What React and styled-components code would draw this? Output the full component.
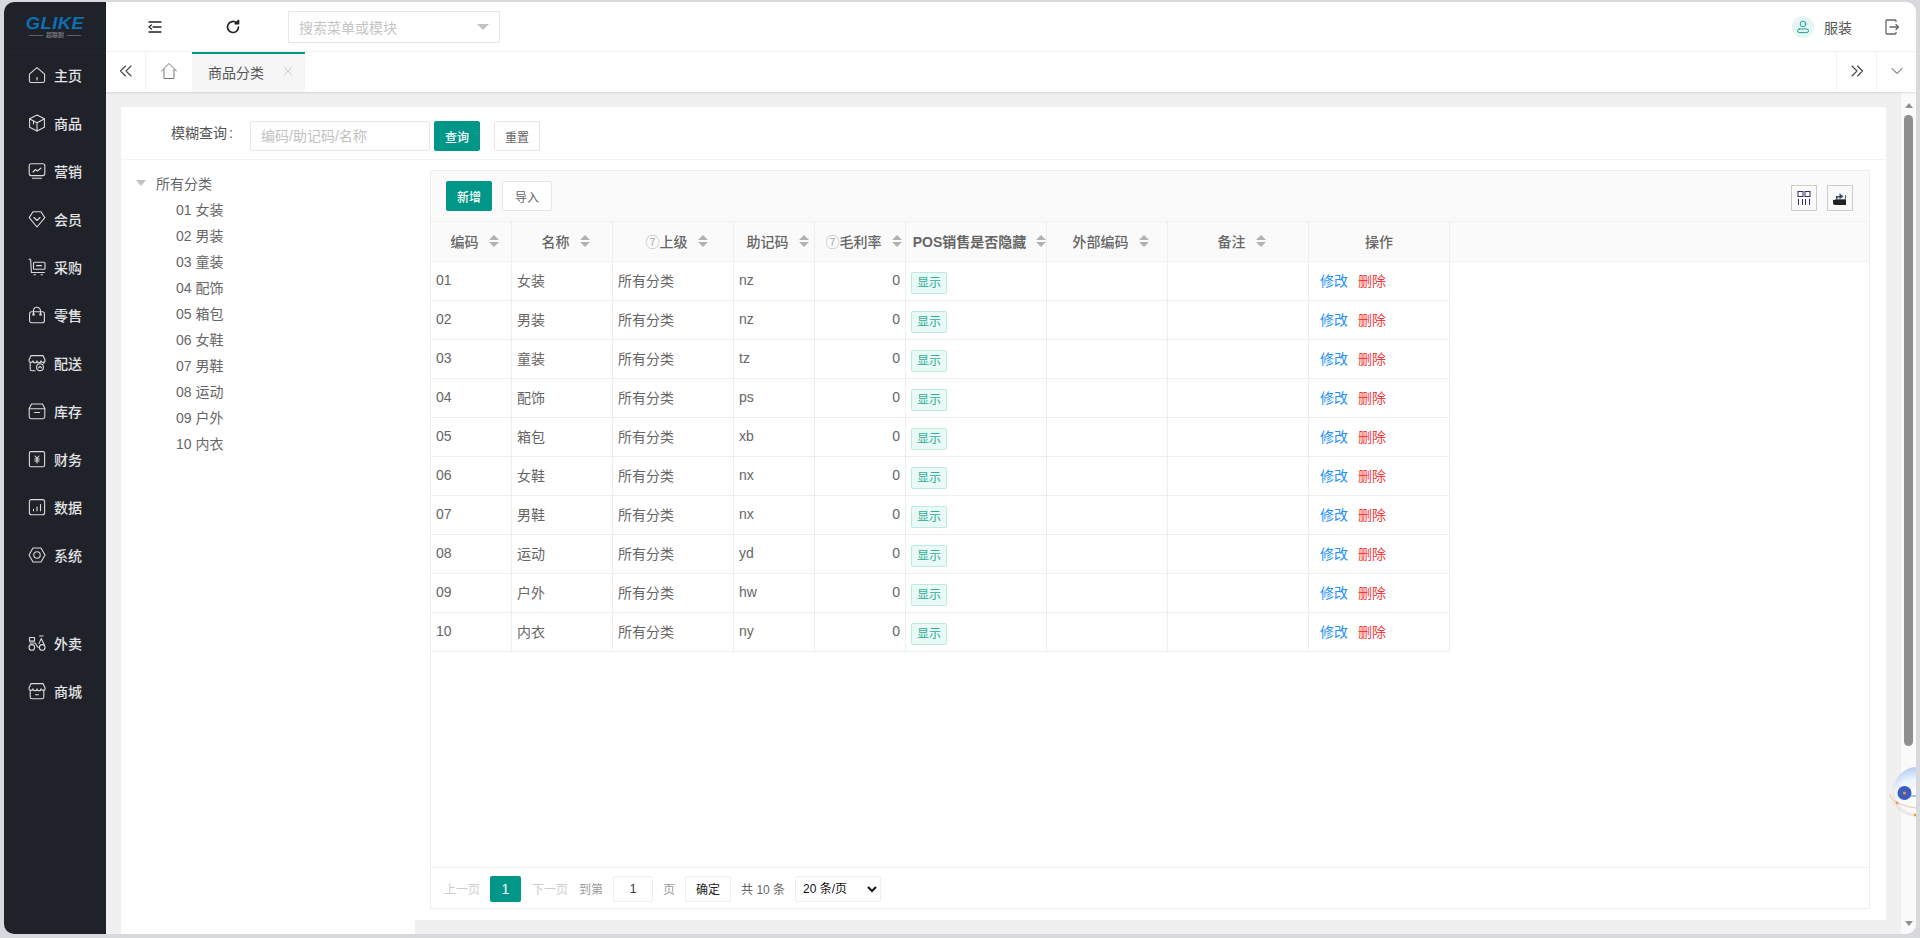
import React from "react";
import styled, { createGlobalStyle } from "styled-components";

const Global = createGlobalStyle`
  html, body { margin: 0; padding: 0; height: 100%; overflow: hidden; background: #d8d9dd; }
  * { box-sizing: border-box; }
  body { font-family: "Liberation Sans", "Noto Sans CJK SC", sans-serif; font-size: 14px; color: #666; }
`;

const Frame = styled.div`
  height: 938px;
  padding: 2px 4px 4px 4px;
`;
const Win = styled.div`
  height: 932px;
  display: flex;
  border-radius: 10px;
  overflow: hidden;
  background: #f0f0f0;
  position: relative;
`;
const Side = styled.aside`
  width: 102px;
  flex: none;
  background: #1f2229;
  display: flex;
  flex-direction: column;
`;
const LogoBox = styled.div`
  height: 50px;
  display: flex;
  flex-direction: column;
  align-items: center;
  padding-top: 13px;
  border-bottom: 1px solid #23262d;
`;
const LogoWord = styled.span`
  font: italic 900 17px/17px "Liberation Sans", sans-serif;
  color: #0f6fb5;
  letter-spacing: 0.4px;
  transform: scaleX(1.08);
`;
const LogoSub = styled.div`
  display: flex;
  align-items: center;
  gap: 3px;
  color: #73767c;
  font-size: 6px;
  line-height: 7px;
  font-weight: 700;
  &::before, &::after { content: ""; width: 14px; height: 1px; background: #5b5e64; }
`;
const MenuList = styled.nav`
  display: flex;
  flex-direction: column;
`;
const MenuItem = styled.div`
  height: 48px;
  display: flex;
  align-items: center;
  padding: 0 0 2px 24px;
  gap: 8px;
  color: #e4e4e4;
  font-size: 14px;
  font-weight: 500;
  margin-top: ${(p) => (p.$gap ? "40px" : "0")};
  svg { flex: none; }
`;
const Right = styled.div`
  flex: 1;
  min-width: 0;
  display: flex;
  flex-direction: column;
`;
const TopBar = styled.header`
  height: 50px;
  flex: none;
  background: #fff;
  border-bottom: 1px solid #f3f3f3;
  display: flex;
  align-items: center;
`;
const TopBtn = styled.div`
  flex: none;
  width: ${(p) => p.$w}px;
  height: 50px;
  display: flex;
  align-items: center;
  justify-content: center;
  color: #333;
`;
const SelectBox = styled.div`
  width: 212px;
  height: 32px;
  margin-left: 26px;
  border: 1px solid #e8e8e8;
  display: flex;
  align-items: center;
  justify-content: space-between;
  padding: 0 10px;
  color: #c4c4c4;
  font-size: 14px;
  &::after {
    content: "";
    border: 6px solid transparent;
    border-top: 6px solid #c2c2c2;
    border-bottom: 0;
  }
`;
const Spacer = styled.div`
  flex: 1;
`;
const Avatar = styled.div`
  width: 22px;
  height: 22px;
  border-radius: 50%;
  background: #e7f6f4;
  display: flex;
  align-items: center;
  justify-content: center;
`;
const UserName = styled.span`
  margin-left: 10px;
  color: #555;
  font-size: 14px;
`;
const LogoutBtn = styled.div`
  margin: 0 16px 0 32px;
  display: flex;
`;
const TabBar = styled.div`
  height: 40px;
  flex: none;
  background: #fff;
  display: flex;
  box-shadow: 0 1px 2px rgba(0, 0, 0, 0.12);
  position: relative;
  z-index: 1;
`;
const TabBtn = styled.div`
  flex: none;
  width: ${(p) => p.$w}px;
  display: flex;
  align-items: center;
  justify-content: center;
  padding-bottom: 2px;
  ${(p) => (p.$lb ? "border-left: 1px solid #f3f3f3;" : "")}
  ${(p) => (p.$rb ? "border-right: 1px solid #f3f3f3;" : "")}
`;
const ActiveTab = styled.div`
  width: 113px;
  flex: none;
  background: #f6f6f6;
  border-top: 2px solid #009688;
  display: flex;
  align-items: center;
  padding: 0 0 3px 16px;
  color: #555;
  font-size: 14px;
  position: relative;
`;
const TabClose = styled.span`
  position: absolute;
  left: 91px;
  top: 12px;
  display: flex;
`;
const Scroller = styled.div`
  flex: 1;
  min-height: 0;
  display: flex;
`;
const Content = styled.main`
  flex: 1;
  min-width: 0;
  padding: 15px 15px 14px 15px;
  display: flex;
`;
const Card = styled.section`
  flex: 1;
  min-width: 0;
  background: #fff;
  display: flex;
  flex-direction: column;
`;
const QueryBar = styled.div`
  height: 53px;
  flex: none;
  border-bottom: 1px solid #f3f3f3;
  display: flex;
  align-items: flex-start;
  padding-top: 14px;
  padding-left: 50px;
`;
const QueryLabel = styled.label`
  width: 79px;
  flex: none;
  color: #555;
  font-size: 14px;
  line-height: 24px;
`;
const Colon = styled.span`
  margin-left: 2px;
`;
const QueryInput = styled.input`
  width: 180px;
  height: 30px;
  border: 1px solid #e6e6e6;
  border-radius: 2px;
  padding: 0 10px;
  font: 14px "Liberation Sans", "Noto Sans CJK SC", sans-serif;
  outline: none;
  &::placeholder { color: #c2c2c2; opacity: 1; }
`;
const Btn = styled.button`
  width: ${(p) => p.$w || 46}px;
  height: 30px;
  padding: 0;
  flex: none;
  border-radius: 2px;
  margin-left: ${(p) => p.$ml || 0}px;
  font: ${(p) => (p.$primary ? 500 : 400)} 12px "Liberation Sans", "Noto Sans CJK SC", sans-serif;
  background: ${(p) => (p.$primary ? "#009688" : "#fff")};
  color: ${(p) => (p.$primary ? "#fff" : "#666")};
  border: 1px solid ${(p) => (p.$primary ? "#009688" : "#e6e6e6")};
`;
const Body = styled.div`
  flex: 1;
  min-height: 0;
  display: flex;
`;
const Tree = styled.div`
  width: 294px;
  flex: none;
  margin: 0 15px -14px 0;
  background: #fff;
  padding: 10px 0 0 15px;
  color: #666;
`;
const TreeRoot = styled.div`
  height: 26px;
  margin-bottom: 1px;
  display: flex;
  align-items: center;
  gap: 10px;
  &::before {
    content: "";
    border: 5px solid transparent;
    border-top: 6px solid #c2c2c2;
    border-bottom: 0;
  }
`;
const TreeItem = styled.div`
  height: 26px;
  line-height: 26px;
  padding-left: 40px;
`;
const Panel = styled.div`
  width: 1440px;
  flex: none;
  margin: 10px 0 11px;
  border: 1px solid #eee;
  display: flex;
  flex-direction: column;
`;
const Toolbar = styled.div`
  height: 51px;
  flex: none;
  background: #fafafa;
  border-bottom: 1px solid #f0f0f0;
  display: flex;
  align-items: center;
  padding: 0 16px 0 15px;
`;
const IconBtn = styled.div`
  width: 26px;
  height: 26px;
  margin-left: ${(p) => p.$ml}px;
  margin-top: 3px;
  border: 1px solid #ccc;
  display: flex;
  align-items: center;
  justify-content: center;
`;
const HeadRow = styled.div`
  height: 40px;
  flex: none;
  background: #fafafa;
  display: flex;
  border-bottom: 1px solid #f0f0f0;
`;
const HeadCell = styled.div`
  width: ${(p) => p.$w}px;
  flex: none;
  border-right: 1px solid #eee;
  padding-left: ${(p) => (p.$plain ? 0 : 7)}px;
  padding-bottom: 1px;
  display: flex;
  align-items: center;
  justify-content: center;
  gap: 10px;
  white-space: nowrap;
  font-weight: 500;
  color: #666;
  font-size: 14px;
`;
const PosText = styled.b`
  font-weight: 700;
  color: #666;
`;
const Help = styled.span`
  color: #b5b5b5;
  font-size: 14px;
  font-weight: 400;
`;
const Sort = styled.span`
  display: flex;
  flex-direction: column;
  gap: 2px;
  &::before, &::after {
    content: "";
    width: 0;
    border: 5px solid transparent;
  }
  &::before { border-bottom: 5px solid #b2b2b2; border-top: 0; }
  &::after { border-top: 5px solid #b2b2b2; border-bottom: 0; }
`;
const Rows = styled.div`
  flex: 1;
  min-height: 0;
`;
const Row = styled.div`
  width: 1019px;
  height: 39px;
  display: flex;
  border-bottom: 1px solid #eee;
`;
const Cell = styled.div`
  width: ${(p) => p.$w}px;
  flex: none;
  border-right: 1px solid #eee;
  padding: 0 5px 2px;
  display: flex;
  align-items: center;
  justify-content: ${(p) => (p.$right ? "flex-end" : "flex-start")};
  color: #666;
  font-size: 14px;
`;
const TagCell = styled(Cell)`
  padding-top: 4px;
  padding-bottom: 0;
`;
const Tag = styled.span`
  width: 36px;
  height: 22px;
  background: #e9faf6;
  border: 1px solid #c0eadf;
  border-radius: 2px;
  color: #2fae95;
  font-size: 12px;
  line-height: 20px;
  text-align: center;
`;
const ActionCell = styled(Cell)`
  padding-left: 11px;
  gap: 10px;
`;
const Act = styled.a`
  color: ${(p) => p.$c};
`;
const Pager = styled.div`
  height: 41px;
  flex: none;
  border-top: 1px solid #eee;
  display: flex;
  align-items: center;
  padding-left: 13px;
  padding-top: 1px;
  font-size: 12px;
  color: #999;
`;
const PageText = styled.span`
  margin-left: ${(p) => p.$ml || 0}px;
  color: ${(p) => p.$c || "#999"};
  white-space: nowrap;
`;
const PageNum = styled.span`
  width: 31px;
  height: 26px;
  margin-left: 10px;
  background: #009688;
  color: #fff;
  border-radius: 2px;
  text-align: center;
  line-height: 26px;
  font-size: 14px;
`;
const PageInput = styled.input`
  width: 40px;
  height: 26px;
  margin-left: 10px;
  border: 1px solid #eee;
  border-radius: 2px;
  text-align: center;
  color: #333;
  font: 12px "Liberation Sans", sans-serif;
  padding: 0;
`;
const PageBtn = styled.button`
  width: 46px;
  height: 26px;
  margin-left: 10px;
  padding: 0;
  background: #fff;
  border: 1px solid #eee;
  border-radius: 2px;
  color: #222;
  font: 12px "Liberation Sans", "Noto Sans CJK SC", sans-serif;
`;
const PageSelect = styled.select`
  width: 86px;
  height: 26px;
  margin-left: 10px;
  background: #fff;
  border: 1px solid #eee;
  border-radius: 2px;
  color: #111;
  font: 12px "Liberation Sans", "Noto Sans CJK SC", sans-serif;
  padding-left: 3px;
`;
const Track = styled.div`
  width: 15px;
  flex: none;
  background: #fafafa;
  position: relative;
  display: flex;
  flex-direction: column;
  align-items: center;
  padding-top: 11px;
`;
const TrackUp = styled.span`
  border: 4.5px solid transparent;
  border-bottom: 5px solid #8f8f8f;
  border-top: 0;
`;
const Thumb = styled.div`
  width: 9px;
  height: 631px;
  margin-top: 7px;
  border-radius: 5px;
  background: #8f8f8f;
`;
const TrackDown = styled.span`
  margin-top: auto;
  margin-bottom: 8px;
  border: 4.5px solid transparent;
  border-top: 5px solid #8f8f8f;
  border-bottom: 0;
`;
const Orb = styled.svg`
  position: absolute;
  right: 0;
  top: 765px;
`;

/* ---- icons ---- */
const S = ({ children, size = 18, vb = 18, sw = 1.1, c = "#dcdcdc" }) => (
  <svg width={size} height={size} viewBox={`0 0 ${vb} ${vb}`} fill="none" stroke={c} strokeWidth={sw} strokeLinecap="round" strokeLinejoin="round">
    {children}
  </svg>
);
const icons = {
  home: <><path d="M9 1.6 1.4 8.2v6.6a1.8 1.8 0 0 0 1.8 1.7h11.6a1.8 1.8 0 0 0 1.8-1.7V8.2Z" /><path d="M9 11.5v2.5" /></>,
  box: <><path d="M9 1 1.6 4.8v8.4L9 17l7.4-3.8V4.8Z" /><path d="M1.8 5 9 8.8 16.2 5M9 8.8V17M5.5 7v3" /></>,
  mkt: <><rect x="1.2" y="1.8" width="15.6" height="11.8" rx="2" /><path d="M5 10l2.5-2.5 2 1.5L13 6M4.5 16.2h9" /></>,
  vip: <><path d="M5 1.8h8l3.8 5.8L9 17 1.2 7.6Z" /><path d="M6 7.5 9 10.5l3-3" /></>,
  buy: <><path d="M1 1.2h1.6L3.4 14.5h13" /><rect x="5.5" y="4.2" width="11.5" height="7" rx="1" /><path d="M8.5 7.6h5M6 16.8h1.5M13 16.8h1.5" /></>,
  bag: <><rect x="1.6" y="5.8" width="14.8" height="11" rx="2" /><path d="M5.5 8V4.8a3.5 3.5 0 0 1 7 0V8" /><circle cx="5.5" cy="8.5" r="0.8" /><circle cx="12.5" cy="8.5" r="0.8" /></>,
  ship: <><path d="M3 1.6h12l2 4.4a2 2 0 0 1-4 .7 2 2 0 0 1-4 0 2 2 0 0 1-4 0A2 2 0 0 1 1 6Z" /><path d="M2.2 8.5v6.4a1.8 1.8 0 0 0 1.8 1.8h3M15.8 8.5v1" /><circle cx="12" cy="13.2" r="3.4" /><path d="M10.4 13.8l1.6-1.4 1.6 1.4" /></>,
  stock: <><path d="M3.5 2h11l2.3 4.5v8.3a1.9 1.9 0 0 1-1.9 1.9H3.1a1.9 1.9 0 0 1-1.9-1.9V6.5Z" /><path d="M1.2 6.7h15.6M6.5 10.5h5" /></>,
  fin: <><rect x="1.4" y="1.6" width="15.2" height="15.2" rx="1.5" /><path d="M7 6l2 2.4L11 6M6.8 9h4.4M6.8 11h4.4M9 8.4V13" /></>,
  data: <><rect x="1.4" y="1.6" width="15.2" height="15.2" rx="2" /><path d="M5.5 12.8v-1.5M9 12.8V9M12.5 12.8V6.5" /></>,
  sys: <><path d="M5 2h8l4 7-4 7H5L1 9Z" /><circle cx="9" cy="9" r="3.2" /></>,
  bike: <><circle cx="3.8" cy="13.4" r="2.8" /><circle cx="14.2" cy="13.4" r="2.8" /><path d="M1.5 3.5h5v3.6h-5ZM1.8 9h5.4l2.6 4.2h1.6M11.6 2h3.4M13.2 4.6l-2.2 5M13.2 4.6l3.2 6.4" /></>,
  shop: <><path d="M3 1.6h12l2 4.4a2 2 0 0 1-4 .7 2 2 0 0 1-4 0 2 2 0 0 1-4 0A2 2 0 0 1 1 6Z" /><path d="M2.2 8.2v6.7a1.9 1.9 0 0 0 1.9 1.9h9.8a1.9 1.9 0 0 0 1.9-1.9V8.2M7.5 12.8h3" /></>,
};

const menu = [
  ["home", "主页"], ["box", "商品"], ["mkt", "营销"], ["vip", "会员"], ["buy", "采购"], ["bag", "零售"],
  ["ship", "配送"], ["stock", "库存"], ["fin", "财务"], ["data", "数据"], ["sys", "系统"],
  ["bike", "外卖", true], ["shop", "商城"],
];
const cats = [
  ["01", "女装", "nz"], ["02", "男装", "nz"], ["03", "童装", "tz"], ["04", "配饰", "ps"], ["05", "箱包", "xb"],
  ["06", "女鞋", "nx"], ["07", "男鞋", "nx"], ["08", "运动", "yd"], ["09", "户外", "hw"], ["10", "内衣", "ny"],
];
const W = [81, 101, 121, 81, 91, 141, 121, 141, 141];

export default function App() {
  return (
    <>
      <Global />
      <Frame>
        <Win>
          <Side>
            <LogoBox>
              <LogoWord>GLIKE</LogoWord>
              <LogoSub>超联耐</LogoSub>
            </LogoBox>
            <MenuList>
              {menu.map(([i, t, gap]) => (
                <MenuItem key={t} $gap={gap}>
                  <S size={18}>{icons[i]}</S>
                  {t}
                </MenuItem>
              ))}
            </MenuList>
          </Side>
          <Right>
            <TopBar>
              <TopBtn $w={98}>
                <S size={16} vb={16} c="#222" sw={1.3}>
                  <path d="M2 3h12M6 8h8M2 13h12M4.5 6 2 8l2.5 2" />
                </S>
              </TopBtn>
              <TopBtn $w={58}>
                <S size={16} vb={16} c="#222" sw={1.7}>
                  <path d="M13.5 8a5.5 5.5 0 1 1-1.7-4" />
                  <path d="M13.5 1.5v3.2h-3.2z" fill="#222" />
                </S>
              </TopBtn>
              <SelectBox>搜索菜单或模块</SelectBox>
              <Spacer />
              <Avatar>
                <S size={14} vb={14} c="#16a592" sw={1}>
                  <circle cx="7" cy="4" r="2.8" />
                  <rect x="1.5" y="9" width="11" height="3.6" rx="1.8" />
                </S>
              </Avatar>
              <UserName>服装</UserName>
              <LogoutBtn>
                <S size={16} vb={16} c="#666" sw={1.3}>
                  <path d="M12 2.5V2a1 1 0 0 0-1-1H3a1 1 0 0 0-1 1v12a1 1 0 0 0 1 1h8a1 1 0 0 0 1-1v-.5M6 8h8.5M12 5.5 14.5 8 12 10.5" />
                </S>
              </LogoutBtn>
            </TopBar>
            <TabBar>
              <TabBtn $w={40} $rb>
                <S size={14} vb={14} c="#444" sw={1.1}>
                  <path d="M6.5 2 1.5 7l5 5M12 2 7 7l5 5" />
                </S>
              </TabBtn>
              <TabBtn $w={46}>
                <S size={18} vb={18} c="#666" sw={0.9}>
                  <path d="M1.5 9 9 1.5 16.5 9M4 7.5V16.5H14V7.5" />
                </S>
              </TabBtn>
              <ActiveTab>
                商品分类
                <TabClose>
                  <S size={10} vb={10} c="#c8c8c8" sw={1}>
                    <path d="M1.5 1.5l7 7M8.5 1.5l-7 7" />
                  </S>
                </TabClose>
              </ActiveTab>
              <Spacer />
              <TabBtn $w={40} $lb>
                <S size={14} vb={14} c="#444" sw={1.1}>
                  <path d="M2 2l5 5-5 5M7.5 2l5 5-5 5" />
                </S>
              </TabBtn>
              <TabBtn $w={40} $lb>
                <S size={14} vb={14} c="#444" sw={1}>
                  <path d="M2 4.5 7 9.5l5-5" />
                </S>
              </TabBtn>
            </TabBar>
            <Scroller>
              <Content>
                <Card>
                  <QueryBar>
                    <QueryLabel>模糊查询<Colon>:</Colon></QueryLabel>
                    <QueryInput placeholder="编码/助记码/名称" />
                    <Btn $primary $ml={4}>查询</Btn>
                    <Btn $ml={14}>重置</Btn>
                  </QueryBar>
                  <Body>
                    <Tree>
                      <TreeRoot>所有分类</TreeRoot>
                      {cats.map(([c, n]) => (
                        <TreeItem key={c}>{c} {n}</TreeItem>
                      ))}
                    </Tree>
                    <Panel>
                      <Toolbar>
                        <Btn $primary>新增</Btn>
                        <Btn $ml={10} $w={50}>导入</Btn>
                        <Spacer />
                        <IconBtn $ml={0}>
                          <svg width="14" height="14" viewBox="0 0 14 14" fill="none" stroke="#3b2a6b" strokeWidth="1">
                            <rect x="1" y="0.5" width="5" height="5" />
                            <rect x="8" y="0.5" width="5" height="5" />
                            <path d="M1.5 8v6M5.5 8v6M8.5 8v6M12.5 8v6" />
                          </svg>
                        </IconBtn>
                        <IconBtn $ml={10}>
                          <svg width="16" height="16" viewBox="0 0 16 16">
                            <path d="M1 10h13v5H3a2 2 0 0 1-2-2Z" fill="#222" />
                            <path d="M4 9V6h3.5V3.2L11.5 6.5 7.5 9.2V7.5H5.5V9Z" fill="#3a4a6b" />
                            <path d="M13.5 5v5M3 9.5h10" stroke="#666" fill="none" />
                          </svg>
                        </IconBtn>
                      </Toolbar>
                      <HeadRow>
                        <HeadCell $w={W[0]}>编码<Sort /></HeadCell>
                        <HeadCell $w={W[1]}>名称<Sort /></HeadCell>
                        <HeadCell $w={W[2]}><span><Help>⑦</Help>上级</span><Sort /></HeadCell>
                        <HeadCell $w={W[3]}>助记码<Sort /></HeadCell>
                        <HeadCell $w={W[4]}><span><Help>⑦</Help>毛利率</span><Sort /></HeadCell>
                        <HeadCell $w={W[5]}><PosText>POS销售是否隐藏</PosText><Sort /></HeadCell>
                        <HeadCell $w={W[6]}>外部编码<Sort /></HeadCell>
                        <HeadCell $w={W[7]}>备注<Sort /></HeadCell>
                        <HeadCell $w={W[8]} $plain>操作</HeadCell>
                      </HeadRow>
                      <Rows>
                        {cats.map(([c, n, k]) => (
                          <Row key={c}>
                            <Cell $w={W[0]}>{c}</Cell>
                            <Cell $w={W[1]}>{n}</Cell>
                            <Cell $w={W[2]}>所有分类</Cell>
                            <Cell $w={W[3]}>{k}</Cell>
                            <Cell $w={W[4]} $right>0</Cell>
                            <TagCell $w={W[5]}><Tag>显示</Tag></TagCell>
                            <Cell $w={W[6]} />
                            <Cell $w={W[7]} />
                            <ActionCell $w={W[8]}>
                              <Act $c="#1e90ff">修改</Act>
                              <Act $c="#f5393a">删除</Act>
                            </ActionCell>
                          </Row>
                        ))}
                      </Rows>
                      <Pager>
                        <PageText $c="#ccc">上一页</PageText>
                        <PageNum>1</PageNum>
                        <PageText $c="#ccc" $ml={11}>下一页</PageText>
                        <PageText $ml={11}>到第</PageText>
                        <PageInput defaultValue="1" />
                        <PageText $ml={10}>页</PageText>
                        <PageBtn>确定</PageBtn>
                        <PageText $ml={10} $c="#666">共 10 条</PageText>
                        <PageSelect defaultValue="20">
                          <option value="20">20 条/页</option>
                          <option value="50">50 条/页</option>
                        </PageSelect>
                      </Pager>
                    </Panel>
                  </Body>
                </Card>
              </Content>
              <Track>
                <TrackUp />
                <Thumb />
                <TrackDown />
              </Track>
            </Scroller>
          </Right>
          <Orb width="27" height="60" viewBox="0 0 27 60">
            <defs>
              <radialGradient id="orbG" cx="0.45" cy="0.75" r="0.85">
                <stop offset="0" stopColor="#ffffff" />
                <stop offset="0.55" stopColor="#eef4fd" />
                <stop offset="1" stopColor="#9dbeef" />
              </radialGradient>
            </defs>
            <circle cx="28" cy="25" r="25" fill="#dfe2ea" opacity="0.45" />
            <circle cx="28" cy="23" r="23" fill="url(#orbG)" />
            <circle cx="15.5" cy="26" r="7" fill="#3d5cbb" />
            <circle cx="15.5" cy="26" r="1.5" fill="#f29a3a" />
            <path d="M22 29h5" stroke="#3d5cbb" strokeWidth="0.8" />
            <path d="M1 27c0 7 12 12 26 14" fill="none" stroke="#f5b571" strokeWidth="0.8" />
            <path d="M3 35c5 8 14 12 24 14" fill="none" stroke="#f9d6ae" strokeWidth="0.7" />
            <circle cx="8" cy="36" r="1.4" fill="#f29a3a" />
            <circle cx="26" cy="48" r="1.3" fill="#f29a3a" />
          </Orb>
        </Win>
      </Frame>
    </>
  );
}
